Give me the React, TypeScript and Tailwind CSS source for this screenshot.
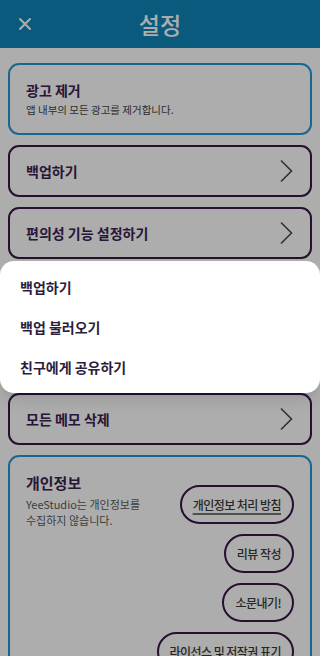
import React from 'react';

const font = { fontFamily: '"Noto Sans CJK KR", "Noto Sans", sans-serif' };

const Chevron = () => (
	<svg width="14" height="24" viewBox="0 0 14 24" fill="none" className="shrink-0">
		<polyline points="2,1.5 12.5,12 2,22.5" stroke="#4a4a4a" strokeWidth="1.6" strokeLinejoin="miter" />
	</svg>
);

const CloseIcon = () => (
	<svg width="14" height="14" viewBox="0 0 14 14" fill="none">
		<path d="M2 2 L12 12 M12 2 L2 12" stroke="white" strokeWidth="2" strokeLinecap="round" />
	</svg>
);

interface RowCardProps {
	label?: string;
}

// rows hidden behind the popup menu carry no label
const RowCard = ({ label }: RowCardProps) => (
	<div className="flex h-[52px] items-center justify-between rounded-[11px] border-2 border-[#3b1747] pl-4 pr-[17px]">
		<span className="text-[14px] font-bold text-[#3b2350]">{label}</span>
		<Chevron />
	</div>
);

const Pill = ({ label, underline }: { label: string; underline?: boolean }) => (
	<button className="flex h-[39px] shrink-0 items-center whitespace-nowrap rounded-full border-2 border-[#3b1747] px-[11px] text-[12px] font-medium tracking-[-0.045em] text-[#3a3a3a]">
		<span className={underline ? 'underline decoration-[#777] decoration-2 underline-offset-[3px]' : ''}>{label}</span>
	</button>
);

const menuItem = 'flex h-[40px] items-center text-[14px] font-bold text-[#2d1d3d]';

export default function App() {
	return (
		<div className="relative h-[656px] w-[320px] overflow-hidden bg-white" style={font}>
			<header className="flex h-12 items-center bg-[#1085ba] px-[18px]">
				<CloseIcon />
				<h1 className="flex-1 pr-[14px] text-center text-[23px] font-medium text-white">설정</h1>
			</header>

			<main className="flex flex-col gap-[10px] px-2 pt-[15px]">
				<div className="flex h-[72px] flex-col justify-center rounded-[11px] border-2 border-[#2599d2] px-4">
					<span className="text-[14px] font-bold leading-5 text-[#3b2350]">광고 제거</span>
					<span className="mt-[2px] text-[10.5px] leading-4 text-[#444]">앱 내부의 모든 광고를 제거합니다.</span>
				</div>
				<RowCard label="백업하기" />
				<RowCard label="편의성 기능 설정하기" />
				<RowCard />
				<RowCard />
				<RowCard label="모든 메모 삭제" />
				<div className="flex gap-2 rounded-[11px] border-2 border-[#2599d2] px-4 pb-4 pt-[14px]">
					<div className="min-w-0 flex-1">
						<h2 className="text-[15px] font-bold leading-6 text-[#3b2350]">개인정보</h2>
						<p className="mt-[1px] w-[125px] text-[11px] leading-4 text-[#5a5a5a]">
							YeeStudio는 개인정보를 수집하지 않습니다.
						</p>
					</div>
					<div className="mt-[14px] flex shrink-0 flex-col items-end gap-[10px]">
						<Pill label="개인정보 처리 방침" underline />
						<Pill label="리뷰 작성" />
						<Pill label="소문내기!" />
						<Pill label="라이선스 및 저작권 표기" />
					</div>
				</div>
			</main>

			<div className="absolute inset-0 bg-black/[0.32]" />

			<div className="absolute left-0 right-0 top-[261px] flex h-[132px] flex-col justify-center rounded-[14px] bg-white px-5 shadow-lg">
				<div className={menuItem}>백업하기</div>
				<div className={menuItem}>백업 불러오기</div>
				<div className={menuItem}>친구에게 공유하기</div>
			</div>
		</div>
	);
}
